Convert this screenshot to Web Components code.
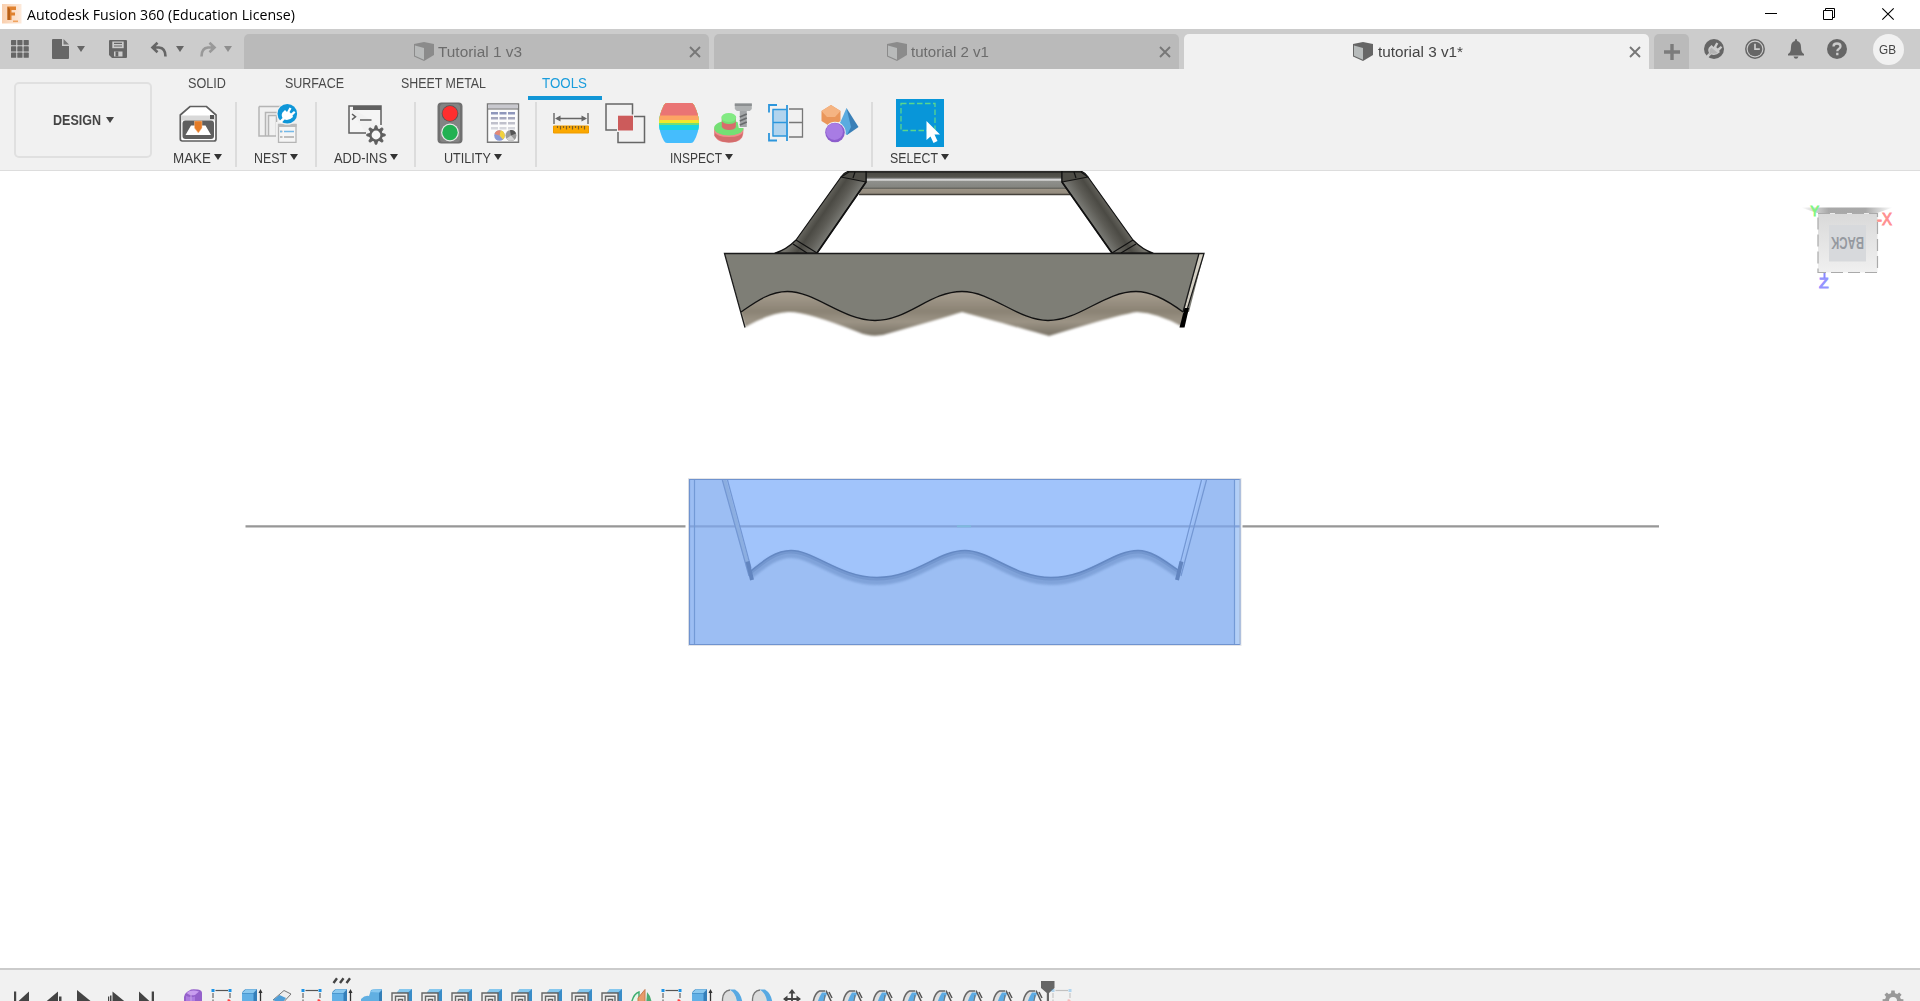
<!DOCTYPE html>
<html lang="en">
<head>
<meta charset="utf-8">
<title>Autodesk Fusion 360 (Education License)</title>
<style>
html,body{margin:0;padding:0;background:#fff;overflow:hidden}
body{font-family:"Liberation Sans",Arial,sans-serif}
</style>
</head>
<body>
<fusion-app></fusion-app>
<script>
const define = (name, html, setup) => customElements.define(name, class extends HTMLElement {
  connectedCallback() {
    if (this.shadowRoot) return;
    const t = document.createElement('template');
    t.innerHTML = typeof html === 'function' ? html(this) : html;
    this.attachShadow({ mode: 'open' }).appendChild(t.content.cloneNode(true));
    if (setup) setup(this);
  }
});

/* Text condensed or widened so that it occupies a given width. */
define('fit-text', el => `<style>:host{display:block;white-space:nowrap;width:${el.getAttribute('w')}px}span{display:inline-block;transform-origin:0 50%}</style><span>${el.getAttribute('text')}</span>`, el => {
  const s = el.shadowRoot.querySelector('span');
  s.style.transform = `scaleX(${((+el.getAttribute('w') + 1) / s.getBoundingClientRect().width).toFixed(4)})`;
});

/* ---------- icons ---------- */
const D = '#5f5f5f';
const ICONS = {
  logo: [20, 20, `<defs><linearGradient id="g"><stop offset="0" stop-color="#f9cfae"/><stop offset="1" stop-color="#fdeadb"/></linearGradient></defs><rect width="19.500" height="19.500" fill="url(#g)"/><path d="M5.500 2.500H14V6H9.500V8.500H13V11.500H9.500V16H5.500Z" fill="#e0822f"/><path d="M5.500 2.500L8 5V16H5.500Z" fill="#b85f17"/><path d="M11 16.500h5v1.600h-5z" fill="#f0a35f"/>`],
  grid: [18, 18, [0, 6.3, 12.6].map(y => [0, 6.3, 12.6].map(x => `<rect x="${x}" y="${y}" width="5.200" height="5.200" rx=".6" fill="#666"/>`).join('')).join('')],
  file: [17, 20, `<path d="M1 0H10V7H17V19Q17 20 16 20H1Q0 20 0 19V1Q0 0 1 0Z" fill="#666"/><path d="M11.500 0L17 5.500H11.500Z" fill="#777"/>`],
  save: [18, 18, `<path d="M1 0H17Q18 0 18 1V17Q18 18 17 18H3L0 15V1Q0 0 1 0Z" fill="#666"/><path d="M3.300 1.500H14.700V8.200H3.300Z" fill="#ccc"/><path d="M5 3.300h8M5 6h8" stroke="#666" stroke-width="1.200"/><path d="M5 11.500H13.500V16.500H5Z" fill="#ccc"/><path d="M6.500 11.500h2.800v5h-2.800z" fill="#666"/>`],
  undo: [16, 15, `<path d="M6.500 .8L1.500 5.500L6.500 10.200M2 5.500H8Q14.500 6 14.500 14.500" fill="none" stroke="#666" stroke-width="2.600"/>`],
  redo: [16, 15, `<path d="M9.500 .8L14.500 5.500L9.500 10.200M14 5.500H8Q1.500 6 1.500 14.500" fill="none" stroke="#999" stroke-width="2.600"/>`],
  cube: [20, 19, `<path d="M0 2L10 0L20 2V13L10 19L0 14.500Z" fill="#666"/><path d="M1 3.500L10 6V17.700L1 13.700Z" fill="#b7bbbb"/>`],
  x: [12, 12, `<path d="M1 1L11 11M11 1L1 11" stroke="currentColor" stroke-width="1.900"/>`],
  plus: [16, 16, `<path d="M8 0V16M0 8H16" stroke="#7c7c7c" stroke-width="3.400"/>`],
  jobs: [20, 20, `<circle cx="10" cy="10" r="10" fill="#666"/><path d="M1.500 17.500L5 14Q3 10 6 7.500L7.500 6L9.700 8L12.300 3.500L14.300 4.500L12.300 8.200L13.700 9.600L16.800 7L18.300 8.600L15.200 11.700L15.800 13.300Q12 17 7.200 15.500L4 18.800Z" fill="#ccc"/><path d="M5.800 13.500Q4.800 10.500 7.500 8.700L13.800 14Q10.500 15.500 7.500 14.300L5 16.500Z" fill="#666" opacity=".25"/>`],
  clock: [20, 20, `<circle cx="10" cy="10" r="9.200" fill="none" stroke="#666" stroke-width="1.500"/><circle cx="10" cy="10" r="7.300" fill="#666"/><path d="M10 4.800V10.200H14.800" fill="none" stroke="#ccc" stroke-width="1.700"/>`],
  bell: [16, 20, `<path d="M8 0Q9.200 0 9.200 2Q13 3.200 13 8Q13 13.500 16 15V16.500H0V15Q3 13.500 3 8Q3 3.200 6.800 2Q6.800 0 8 0ZM5.500 17.500H10.500Q9.800 19.700 8 19.700Q6.200 19.700 5.500 17.500Z" fill="#666"/>`],
  help: [20, 20, `<circle cx="10" cy="10" r="10" fill="#666"/><path d="M6.500 7.500Q6.500 4.500 10 4.500Q13.500 4.500 13.500 7.300Q13.500 9 11.700 10Q10.300 10.800 10.300 12.300M10.300 13.800V16.200" fill="none" stroke="#ccc" stroke-width="2.300"/>`],
  min: [12, 12, `<path d="M0 5.500H12" stroke="#000"/>`],
  restore: [12, 12, `<path d="M.5 2.500H9.500V11.500H.5ZM2.500 2.500V.5H11.500V9.500H9.500" fill="none" stroke="#000"/>`],
  close: [12, 12, `<path d="M.3 .3L11.700 11.700M11.700 .3L.3 11.700" stroke="#000" stroke-width="1.100"/>`],
  arrow: [8, 6, `<path d="M0 0H8L4 6Z" fill="currentColor"/>`],
  make: [40, 40, `<path d="M2.300 12L12 3.500H28.500L38 12V36Q38 38 36 38H4.300Q2.300 38 2.300 36Z" fill="#fff" stroke="${D}" stroke-width="1.700"/><path d="M3.200 12.500H37.200V17.500H3.200Z" fill="#d9d9d9"/><path d="M32 12h4v4h-4z" fill="#555"/><rect x="4.500" y="17.500" width="31.500" height="18.500" rx="3" fill="${D}"/><path d="M7.500 32L13 22.500H16.500L20.300 28L24 22.500H27.500L33 32Z" fill="#fff"/><path d="M16.500 18H24V25L20.300 30L16.500 25Z" fill="#e57c28" stroke="#f6c49d" stroke-width=".5"/>`],
  nest: [40, 40, `<path d="M1 3.500H25V16M1 3.500V33H7.500V9.500H19M10.500 33V12.500H18.500V33ZM10.500 33H7.500M18.500 33H21" fill="none" stroke="#b5b5b5" stroke-width="1.500"/><path d="M18 19H40V41H18Z" fill="#f1f1f1"/><path d="M20.500 21.500H38V39.300H20.500Z" fill="#f5f5f5" stroke="#b5b5b5" stroke-width="1.300"/><path d="M20 21H38.500V24H20Z" fill="#bbb"/><path d="M22 28.500h2.500M22 34h2.500M26 34h10" stroke="#aaa" stroke-width="1.500"/><path d="M22 28.500h2M26 28.500h10" stroke="#74b9e8" stroke-width="1.500"/><circle cx="29.300" cy="11" r="10.800" fill="#f1f1f1"/><circle cx="29.300" cy="10.800" r="9.800" fill="#0e96d8"/><path d="M21 18.500L24.500 15Q22.500 11 25.500 8.500L27 7L29 9L31.500 4.500L33.500 5.500L31.500 9L33 10.500L36 8L37.500 9.500L34.500 12.500L35 14Q31 18 26.500 16.500L23.500 20Z" fill="#fff"/>`],
  addins: [40, 40, `<path d="M3 3H35.500V24M20 30.500H3V3" fill="#f5f5f5"/><path d="M20 30H3V3H35V22" fill="none" stroke="${D}" stroke-width="1.500"/><path d="M7 3H35V7H7Z" fill="${D}"/><path d="M6 11L9.500 13.800L6 16.600M14 17H25.500" fill="none" stroke="${D}" stroke-width="1.500"/><circle cx="30" cy="32" r="9.500" fill="#f1f1f1"/><circle cx="30" cy="32" r="5.600" fill="#f5f5f5" stroke="${D}" stroke-width="2.400"/>${[0,45,90,135,180,225,270,315].map(a => `<path d="M28.500 26L29.200 22.800H30.800L31.500 26Z" fill="${D}" stroke="${D}" stroke-width="1" transform="rotate(${a} 30 32)"/>`).join('')}`],
  traffic: [40, 40, `<rect x="7.500" y="-.5" width="25" height="41" rx="4" fill="#707070"/><rect x="10" y="1" width="20" height="38" rx="3" fill="#838383"/><circle cx="20" cy="10.500" r="8.300" fill="#555"/><circle cx="20" cy="10.500" r="7.500" fill="#ff2f2f"/><circle cx="20" cy="29.500" r="8.900" fill="#e8e8e8"/><circle cx="20" cy="29.500" r="7.700" fill="#22b152"/>`],
  sheet: [40, 40, `<path d="M4.500 1H35.500V39.300H4.500Z" fill="#fcfcfc" stroke="#777" stroke-width="1.400"/><path d="M5.200 1.500H34.800V5.500H5.200Z" fill="#c9c9cf"/><path d="M5 6H35" stroke="#666"/>${[9, 14, 19, 24].map((y, i) => [8, 16.500, 25].map((x, j) => `<rect x="${x}" y="${y}" width="7" height="2.500" fill="${['#8e96bb', '#a5a7bd', '#bfc0cb', '#d6d7dd'][i]}"/>`).join('')).join('')}<circle cx="16.500" cy="32.500" r="5.300" fill="#8a9ad5"/><path d="M16.500 32.500L17.500 27.300A5.300 5.300 0 0 1 20 36.500Z" fill="#f2d23d"/><path d="M16.500 32.500L11.600 31A5.300 5.300 0 0 1 17.500 27.300Z" fill="#e48875"/><circle cx="28" cy="32.500" r="5.500" fill="#9a9a9a"/><path d="M28 32.500L27 27.200A5.500 5.500 0 0 1 33 30.500Z" fill="#555"/><path d="M28 32.500L23.500 35.500A5.500 5.500 0 0 0 31.500 36.600Z" fill="#d5d5d5"/>`],
  measure: [40, 40, `<path d="M3 10V21M37 10V21M6 15.500H34" stroke="#666" stroke-width="1.400"/><path d="M4 15.500L9.500 12.500V18.500ZM36 15.500L30.500 12.500V18.500Z" fill="#666"/><path d="M2.500 23H37.500V30H2.500Z" fill="#fba800" stroke="#ed9b00"/>${[6,9,12,15,18,21,24,27,30,33].map((x, i) => `<path d="M${x + .5} 23V${i % 2 ? 26.500 : 25}" stroke="#7c6028" stroke-width="1.200"/>`).join('')}`],
  interfere: [40, 40, `<path d="M12 27H1V1H27.500V11.500M29 13.500H39.500V39.500H13V29" fill="none" stroke="#666" stroke-width="1.500"/><path d="M13 12.700H28V27.500H13Z" fill="#cc5b5b"/>`],
  barrel: [40, 40, `<defs><clipPath id="c"><path d="M8 0H32Q34 0 35 2Q40 12 40 20Q40 29 35 38Q34 40 32 40H8Q6 40 5 38Q0 29 0 20Q0 12 5 2Q6 0 8 0Z"/></clipPath></defs><g clip-path="url(#c)"><rect width="40" height="40" fill="#45bdfd"/><rect width="40" height="27" fill="#17d4e5"/><rect width="40" height="22" fill="#72df74"/><rect width="40" height="20" fill="#efe92b"/><rect width="40" height="17" fill="#fda464"/><rect width="40" height="12.500" fill="#ea7474"/></g>`],
  component: [40, 40, `<g transform="translate(.8 0)"><path d="M1.500 26V30Q2 39.500 16 39.500Q30 39.500 30.500 30V26Z" fill="#e77f7f"/><path d="M1.500 33Q8 39.500 16 39.500Q25 39.500 29 34L30 28H2Z" fill="#d36d6d"/><path d="M1.500 25V29Q4 34 16 34Q29 34 30.500 28V25Z" fill="#ef8b8b"/><ellipse cx="16" cy="25" rx="14.700" ry="7.500" fill="#74df74"/><path d="M9 15V24Q11 27 16 27Q22 27 23 24V15Z" fill="#d96b6b"/><path d="M9 13V18Q11 21 16 21Q22 21 23 18V13Z" fill="#74df74"/><ellipse cx="16" cy="14.500" rx="7.300" ry="4.500" fill="#83ea83"/><path d="M22 1H39V7H36V25H26L25 20L24 7H22Z" fill="#f1f1f1"/><path d="M22 .5H39V6L37 8H24L22 6Z" fill="#aeb1b2"/><path d="M22 .5H39V3H22Z" fill="#8b8e90"/><path d="M27 8H34V24H27Z" fill="#a2a5a7"/><path d="M27 14L34 11M27 18L34 15M27 22L34 19" stroke="#686b6d" stroke-width="1.700"/></g>`],
  section: [40, 40, `<g transform="translate(1.500 0)"><path d="M4.500 6.500H19V33H4.500Z" fill="#b2d4ee"/><path d="M9.500 2H1.500V9.500M1.500 30V37.500H9.500M19.500 2V38" fill="none" stroke="#2c96dc" stroke-width="1.800"/><path d="M19 6.500H5.500V33H19M5.500 19.500H19" fill="none" stroke="#2c96dc" stroke-width="1.300"/><path d="M21.500 6H35V34H21.500M21.500 19.500H35" fill="none" stroke="#777" stroke-width="1.300"/></g>`],
  shapes: [40, 40, `<path d="M11 2L20.500 8V18L11 24L1.500 18V8Z" fill="#ea965a"/><path d="M11 2L20.500 8L15 14H7L1.500 8Z" fill="#f5b482"/><path d="M26.500 5L38.500 24L27 32Z" fill="#397fb7"/><path d="M26.500 5L17 27L27 32L31 24Z" fill="#5aabe0"/><circle cx="15" cy="29.500" r="10.700" fill="#f1f1f1"/><circle cx="15" cy="29.500" r="9.800" fill="#8c5dcc"/><circle cx="14.500" cy="28.500" r="8.500" fill="#a87ce4"/>`],
  select: [48, 48, `<path d="M0 0H48V48H0Z" fill="#0896d9"/><path d="M5 4.500H39V31.500H5Z" fill="none" stroke="#5ad68e" stroke-width="1.300" stroke-dasharray="5.500 2.500"/><path d="M30.500 22L44 35.500H38.500L41.500 42L37.500 44L34.500 37.500L30.500 41Z" fill="#fff"/>`],
  first: [30, 26, `<path d="M1 1.500H3.200V24H1ZM16 1.500V24L4 12.500Z" fill="#444"/>`],
  back: [30, 26, `<path d="M13 1.500V24L0 12.500ZM14 6.500H16.500V19H14Z" fill="#444"/>`],
  play: [30, 26, `<path d="M1 0V26L17 13Z" fill="#444"/>`],
  fwd: [30, 26, `<path d="M4.500 1.500V24L18 12.500ZM0 6.500H1.200V19H0ZM2 5.500H3.500V20H2Z" fill="#444"/>`],
  last: [30, 26, `<path d="M0 1.500V24L12 12.500ZM12.700 1.500H15V24H12.700Z" fill="#444"/>`],
  form: [30, 26, `<path d="M6 8Q6 5 9 3L13 .5Q15 0 20 .5Q24 1 24 4V14Q20 22 13 22Q6 22 6 17Z" fill="#9561cb"/><path d="M8.500 4Q13 0 21 2.500L17 6Q12 7 8.500 4Z" fill="#c99df0"/><path d="M8 7Q13 9 17 7.500V20H8Z" fill="#ad7ce0"/><path d="M13 2V22" stroke="#c8a5e8"/>`],
  sketch: [30, 26, `<path d="M8.500 1.500H21" stroke="#555" stroke-width="1.200"/><path d="M6 4V22M23 4V10" stroke="#666" stroke-width="1.200" stroke-dasharray="5 1.500"/><path d="M4.500 0h3v3h-3zM21.500 0h3v3h-3z" fill="#1a93e8"/><path d="M22 10l3 3-2 1-3-3z" fill="#f44"/>`],
  extrude: [30, 26, `<path d="M5 4Q7 0 10 0H20V18L16 23H5Z" fill="#357fb9"/><path d="M5 4L9 .3H20L16.500 4Z" fill="#8cc9ef"/><path d="M5 4.500H16.500V23H5Z" fill="#62b0e5"/><path d="M23.500 2V22" stroke="#333" stroke-width="1.300"/><path d="M21.500 4L23.500 0L25.500 4Z" fill="#333"/>`],
  erase: [30, 26, `<path d="M6 11L17 1.500L24 5L13 17Z" fill="#eee" stroke="#777"/><path d="M6 11L12.500 6L19 9L13 17Z" fill="#4f9ed7"/><path d="M6 11L13 14V20L6 15Z" fill="#ccc"/>`],
  combine: [30, 26, `<path d="M4 10Q8 6 12 7L14 1Q17 0 25 0V11Q21 19 16 20H4Z" fill="#61afe2"/><path d="M22 4L25 1V12L22 16Z" fill="#347fb8"/><path d="M13 3L16 .5H25L22 3.500Z" fill="#88c8f0"/>`],
  shell: [30, 26, `<path d="M10 3.500L13 0H25V17L20 21V6H10Z" fill="#3a8dc8"/><path d="M10 3.500L13 0H25L21 3.500Z" fill="#85c7ee"/><path d="M5 4H21V22H5Z" fill="#eee" stroke="#666" stroke-width="1.400"/><path d="M8.500 22V7.200H18V22M11.500 22V10.500H15.500V22" fill="none" stroke="#666" stroke-width="1.400"/>`],
  mirror: [30, 26, `<path d="M4 16Q6 5 12 3V22H4Z" fill="#e9f5e9" stroke="#3cac6e" stroke-width="1.400"/><path d="M11 9L18 .5V24H11Z" fill="#e99b6b" stroke="#c77a4d"/><path d="M20 3Q25 8 25 18H19Z" fill="#4cab73"/>`],
  fillet: [30, 26, `<path d="M5.500 22V10Q6 2 13 1Q19 4 20 14V22Z" fill="#dcdcdc"/><path d="M5.500 22V10Q6 2 13 1" fill="none" stroke="#777" stroke-width="1.300"/><path d="M12.500 .5H18Q25 5 25.500 15H20Q20 5 12.500 .5Z" fill="#58a9e2"/>`],
  move: [30, 26, `<path d="M15 2V18M7 10H23" stroke="#444" stroke-width="1.800"/><path d="M15 0L18.500 4.500H11.500ZM15 20L18.500 15.500H11.500ZM6 10L10.500 6.500V13.500ZM24 10L19.500 6.500V13.500Z" fill="#444"/>`],
  press: [30, 26, `<path d="M5.500 20Q6 5 12.500 2H17L13 10V22H5.500Z" fill="#dedede"/><path d="M5.500 20Q6 5 12.500 2H18" fill="none" stroke="#666" stroke-width="1.600"/><path d="M15 3.500H20.500Q17 11 15.500 22H9Q10 11 15 3.500Z" fill="#5eace4"/><path d="M19 1.500L24.500 13M22 3L25 9" stroke="#555" stroke-width="1.500"/><path d="M18 6L15.500 20" stroke="#777" stroke-width="1"/>`],
  marker: [16, 20, `<path d="M1 0H14.500V7L9 12V20H6.800V12L1 7Z" fill="#666"/>`],
  slashes: [18, 7, `<path d="M1.500 6L5 1.300M8 6L11.500 1.300M14.500 6L18 1.300" stroke="#444" stroke-width="2.400"/>`],
  gear: [22, 22, `<circle cx="11" cy="11" r="6" fill="none" stroke="#999" stroke-width="4"/>${[0,45,90,135,180,225,270,315].map(a => `<path d="M9 4L9.300 .6H12.700L13 4Z" fill="#999" transform="rotate(${a} 11 11)"/>`).join('')}`]
};
define('ui-icon', el => {
  const [w, h, body] = ICONS[el.getAttribute('name')];
  return `<style>:host{display:block;flex:none;width:${w}px;height:${h}px}svg{display:block;overflow:visible}</style><svg width="${w}" height="${h}" viewBox="0 0 ${w} ${h}">${body}</svg>`;
});

/* ---------- title bar ---------- */
define('title-bar', `<style>
:host{display:flex;height:29px;background:#fff;align-items:flex-start;color:#000}
.logo{margin:4px 4px 0 2px}
fit-text{font:14.700px/29px "Open Sans","Noto Sans",sans-serif;margin-left:1px}
.btns{margin:8px 26px 0 auto;display:flex}
</style><ui-icon class="logo" name="logo"></ui-icon><fit-text w="267" text="Autodesk Fusion 360 (Education License)"></fit-text>
<div class="btns"><ui-icon name="min"></ui-icon><ui-icon name="restore" style="margin:0 47px 0 46px"></ui-icon><ui-icon name="close"></ui-icon></div>`);

/* ---------- document tabs ---------- */
define('doc-tab', el => `<style>
:host{display:flex;box-sizing:border-box;width:465px;height:35px;border-radius:5px 5px 0 0;background:#bababa;color:#6c6c6c;align-items:center;font-size:15.500px;flex:none}
:host([active]){background:#f1f1f1;color:#444}
.l{flex:1;display:flex;justify-content:center;align-items:center;gap:4.500px;padding-left:8px}
.l ui-icon{opacity:.55}:host([active]) .l ui-icon{opacity:1}
fit-text{line-height:35px}
.x{margin:0 8px 0 6px;color:#777}
</style><div class="l"><ui-icon name="cube"></ui-icon><fit-text w="${el.getAttribute('w')}" text="${el.getAttribute('text')}"></fit-text></div><ui-icon class="x" name="x"></ui-icon>`);

define('tab-bar', `<style>
:host{display:flex;height:40px;background:#ccc;align-items:flex-end}
.quick{width:244px;height:40px;display:flex;align-items:center;color:#666;flex:none;box-sizing:border-box;padding-left:11px}
.tabs{display:flex;gap:5px}
.add{width:35px;height:35px;background:#bababa;border-radius:5px 5px 0 0;display:flex;align-items:center;justify-content:center}
.right{display:flex;height:40px;align-items:center;padding-left:14.500px}
.av{width:31px;height:31px;border-radius:50%;background:#f1f1f1;display:flex;align-items:center;justify-content:center;font-size:13px;color:#444;margin-left:26px}
.av fit-text{margin-right:4px}
</style>
<div class="quick"><ui-icon name="grid"></ui-icon><ui-icon name="file" style="margin-left:23px"></ui-icon><ui-icon name="arrow" style="margin:-1px 0 0 8px"></ui-icon><ui-icon name="save" style="margin-left:23.500px"></ui-icon><ui-icon name="undo" style="margin-left:24px"></ui-icon><ui-icon name="arrow" style="margin:-1px 0 0 9px"></ui-icon><ui-icon name="redo" style="margin-left:16px"></ui-icon><ui-icon name="arrow" style="margin:-1px 0 0 8px;color:#8e8e8e"></ui-icon></div>
<div class="tabs"><doc-tab w="83" text="Tutorial 1 v3"></doc-tab><doc-tab w="77" text="tutorial 2 v1"></doc-tab><doc-tab active w="84" text="tutorial 3 v1*"></doc-tab><div class="add"><ui-icon name="plus"></ui-icon></div></div>
<div class="right"><ui-icon name="jobs"></ui-icon><ui-icon name="clock" style="margin-left:21px"></ui-icon><ui-icon name="bell" style="margin-left:23px"></ui-icon><ui-icon name="help" style="margin-left:23.500px"></ui-icon><div class="av"><fit-text w="16" text="GB"></fit-text></div></div>`);

/* ---------- ribbon ---------- */
define('ribbon-group', el => `<style>
:host{display:flex;flex-direction:column;align-items:center;justify-content:flex-end;box-sizing:border-box;height:65px;flex:none;width:${el.getAttribute('width')}px;border-right:2px solid #dcdcdc}
:host([last]){border-right:0}
.icons{height:48px;margin-bottom:3px;display:flex;align-items:center;gap:13.800px;padding-left:${el.getAttribute('shift') || 0}px}
::slotted(ui-icon:not([name=select])){margin-top:-3px}
.lab{display:flex;align-items:center;gap:4px;color:#333;height:17px;font-size:14px;padding-right:${el.getAttribute('pull') || 0}px}
fit-text{color:#3c3c3c;line-height:17px}
ui-icon[name=arrow]{margin-top:-3px}
</style><div class="icons"><slot></slot></div><div class="lab"><fit-text w="${el.getAttribute('w')}" text="${el.getAttribute('label')}"></fit-text><ui-icon name="arrow"></ui-icon></div>`);

define('ribbon-bar', `<style>
:host{display:flex;box-sizing:border-box;height:102px;background:#f1f1f1;border-bottom:1px solid #ddd}
.design{box-sizing:border-box;margin:13px 7px 0 14px;width:138px;height:76px;border:2px solid #e0e0e0;border-radius:5px;display:flex;align-items:center;justify-content:center;gap:6px;font-weight:bold;font-size:14px;color:#444;flex:none}
.main{display:flex;flex-direction:column}
nav{display:flex;height:31px;font-size:14px;color:#4a4a4a}
nav fit-text{line-height:28px}
nav div{height:27px;box-sizing:content-box}
nav .on{border-bottom:4px solid #1296d6;color:#1b9ddc;padding:0 16px 0 14px}
.groups{display:flex;margin-top:2px}
</style>
<div class="design"><fit-text w="47" text="DESIGN"></fit-text><ui-icon name="arrow"></ui-icon></div>
<div class="main"><nav><div style="margin-left:28.500px"><fit-text w="37" text="SOLID"></fit-text></div><div style="margin-left:60px"><fit-text w="58" text="SURFACE"></fit-text></div><div style="margin-left:58.500px"><fit-text w="84" text="SHEET METAL"></fit-text></div><div class="on" style="margin-left:43px"><fit-text w="44" text="TOOLS"></fit-text></div></nav>
<div class="groups">
<ribbon-group shift="1" width="78" w="37" label="MAKE"><ui-icon name="make"></ui-icon></ribbon-group>
<ribbon-group shift="3" width="80" w="32" label="NEST"><ui-icon name="nest"></ui-icon></ribbon-group>
<ribbon-group shift="1" width="99" w="52" label="ADD-INS"><ui-icon name="addins"></ui-icon></ribbon-group>
<ribbon-group shift="2" pull="6" width="121" w="46" label="UTILITY"><ui-icon name="traffic"></ui-icon><ui-icon name="sheet"></ui-icon></ribbon-group>
<ribbon-group shift="3" pull="6" width="336" w="51" label="INSPECT"><ui-icon name="measure"></ui-icon><ui-icon name="interfere"></ui-icon><ui-icon name="barrel"></ui-icon><ui-icon name="component"></ui-icon><ui-icon name="section"></ui-icon><ui-icon name="shapes"></ui-icon></ribbon-group>
<ribbon-group last width="93" w="47" label="SELECT"><ui-icon name="select"></ui-icon></ribbon-group>
</div></div>`);

/* ---------- 3D viewport ---------- */
const wave = 'C754 303 769 291.500 787.500 291.500C815 291.500 843 320.500 875 320.500C908 320.500 930 291.500 962 291.500C992 291.500 1018 320.500 1048 320.500C1080 320.500 1104 291.500 1136 291.500C1153 291.500 1171 303 1183 312';
const wave2 = 'M751 571C762 562 775 550.500 791 550.500C814 550.500 840 577.500 877 577.500C916 577.500 938 550.500 965 550.500C990 550.500 1014 577.500 1051 577.500C1090 577.500 1112 550.500 1138 550.500C1152 550.500 1166 562 1178 570';
define('view-port', `<style>:host{display:block;height:797px;background:#fff}svg{display:block;font-family:"Liberation Sans",Arial,sans-serif}</style>
<svg width="1920" height="796" viewBox="0 171 1920 796">
<defs>
<linearGradient id="bar" x1="0" y1="171" x2="0" y2="195" gradientUnits="userSpaceOnUse"><stop offset="0" stop-color="#45443f"/><stop offset=".26" stop-color="#55544d"/><stop offset=".32" stop-color="#999"/><stop offset=".37" stop-color="#ececec"/><stop offset=".43" stop-color="#8f908c"/><stop offset=".65" stop-color="#858681"/><stop offset=".73" stop-color="#696861"/><stop offset=".77" stop-color="#9b9284"/><stop offset=".94" stop-color="#938b7e"/><stop offset="1" stop-color="#555"/></linearGradient>
<linearGradient id="legL" x1="815" y1="207" x2="840" y2="224" gradientUnits="userSpaceOnUse"><stop offset="0" stop-color="#72716a"/><stop offset=".35" stop-color="#4b4a44"/><stop offset=".6" stop-color="#5d5c56"/><stop offset="1" stop-color="#81827d"/></linearGradient>
<linearGradient id="legR" x1="1114" y1="207" x2="1089" y2="224" gradientUnits="userSpaceOnUse"><stop offset="0" stop-color="#72716a"/><stop offset=".35" stop-color="#4b4a44"/><stop offset=".6" stop-color="#5d5c56"/><stop offset="1" stop-color="#81827d"/></linearGradient>
<linearGradient id="taupe" x1="0" y1="291" x2="0" y2="336" gradientUnits="userSpaceOnUse"><stop offset="0" stop-color="#a89f91"/><stop offset=".45" stop-color="#8b8374"/><stop offset=".68" stop-color="#9c9486"/><stop offset="1" stop-color="#797265"/></linearGradient>
<linearGradient id="cubeg" x1="0" y1="0" x2="0" y2="1"><stop offset="0" stop-color="#d9d9d9"/><stop offset="1" stop-color="#f0f0f0"/></linearGradient>
<linearGradient id="sh"><stop offset="0" stop-color="#999" stop-opacity="0"/><stop offset=".3" stop-color="#999" stop-opacity=".85"/><stop offset=".7" stop-color="#999" stop-opacity=".85"/><stop offset="1" stop-color="#999" stop-opacity="0"/></linearGradient>
<filter id="soft" x="-5%" y="-20%" width="110%" height="140%"><feGaussianBlur stdDeviation=".9"/></filter>
<filter id="soft2" x="-5%" y="-50%" width="110%" height="200%"><feGaussianBlur stdDeviation="1.300"/></filter>
<clipPath id="belly"><path d="M741 312${wave}L1183 345H747Z"/></clipPath>
</defs>
<g stroke="#111" stroke-width="1.200" stroke-linejoin="round">
<path d="M866 171H1062L1070 195H859Z" fill="url(#bar)" stroke="none"/><path d="M859 194.500H1070" stroke="#45413b" stroke-width="1.500"/><path d="M866 172H1062"/>
<path d="M841 177Q844 172 850 171H866V182L817 253H775Q786 250 796 240Z" fill="url(#legL)"/>
<path d="M841 177L849 172H866V182Z" fill="#4d4c46"/><path d="M853 178L855 172" fill="none"/>
<path d="M796 240L817 253M793 244L807 253" fill="none"/><path d="M866 182L817 253" stroke-width="1.800"/>
<path d="M1088 177Q1085 172 1080 171H1062V182L1112 253H1153Q1143 250 1133 240Z" fill="url(#legR)"/>
<path d="M1088 177L1081 172H1062V182Z" fill="#4d4c46"/><path d="M1076 178L1074 172" fill="none"/>
<path d="M1133 240L1112 253M1136 244L1121 253" fill="none"/><path d="M1062 182L1112 253" stroke-width="1.800"/>
</g>
<g clip-path="url(#belly)"><path d="M730 278H1194L1183 327Q1158 313 1137 312Q1125 313 1049 336Q1035 332 962 312Q940 319 890 333Q874 339 858 332Q805 311 788 312Q770 313 745 327Z" fill="url(#taupe)" filter="url(#soft)"/></g>
<path d="M736 305L745 327.500L736 330Z" fill="#fff"/>
<path d="M724.500 253.500H1204L1189 312L1183 312C1171 303 1153 291.500 1136 291.500C1104 291.500 1080 320.500 1048 320.500C1018 320.500 992 291.500 962 291.500C930 291.500 908 320.500 875 320.500C843 320.500 815 291.500 787.500 291.500C769 291.500 754 303 741 312Z" fill="#7e7e76"/>
<path d="M741 312${wave}" fill="none" stroke="#111" stroke-width="1.300"/>
<path d="M1199 254H1204L1188 309H1184.500Z" fill="#d2cec2"/>
<path d="M745 327.500L724.500 253.500H1204L1187 310M1199 253.500L1183 312" fill="none" stroke="#1b1b1b" stroke-width="1.300"/>
<path d="M1184.500 308H1189L1184.500 327.500H1179.500Z" fill="#000"/>
<path d="M245.500 526.300H685.500M1242.500 526.300H1659" stroke="#979797" stroke-width="2.300"/>
<path d="M688 478H1241.500V646H688Z" fill="#e4e5e8"/>
<path d="M689 479H1240.500V645H689Z" fill="#9cbef3"/>
<path d="M1235 479.500H1240V644H1235Z" fill="#b3cff6"/>
<path d="M724 480H1204L1179 572C1166 562 1152 550.500 1138 550.500C1112 550.500 1090 577.500 1051 577.500C1014 577.500 990 550.500 965 550.500C938 550.500 916 577.500 877 577.500C840 577.500 814 550.500 791 550.500C775 550.500 762 562 751 571Z" fill="#a1c4fb"/>
<g fill="none"><path d="${wave2}" stroke="#7c9fd6" stroke-width="7" transform="translate(0 4)" filter="url(#soft2)" opacity=".85"/>
<path d="${wave2}" stroke="#6d91cb" stroke-width="3" transform="translate(0 1.500)" opacity=".7"/>
<path d="${wave2}" stroke="#6488c3" stroke-width="1.500"/>
<path d="M689 526.300H1240" stroke="#83a3da" stroke-width="2.200"/><path d="M957 526.300H971" stroke="#7fb9dd" stroke-width="2"/>
<path d="M694.500 479V644.500M1234.500 479V644.500" stroke="#739ad6" stroke-width="1.200"/>
<path d="M724.500 480L749 570" stroke="#8caee0" stroke-width="4"/>
<path d="M722.300 480L749 576M727.500 480L751 568M1201.500 480L1178 572M1206.500 480L1181 576" stroke="#7397d3" stroke-width="1.200"/>
<path d="M747.500 561.500L752 580M1181.500 561.500L1177 580" stroke="#6285bf" stroke-width="4"/>
<path d="M689 479.500H1240M689.500 479V644.500H1240" stroke="#6f93cf" stroke-width="1.200"/><path d="M1240 479V644.500" stroke="#9dafcc"/></g>
<path d="M1801 207.500H1893L1877 213H1817Z" fill="url(#sh)"/>
<g font-size="15"><path d="M1818 213.500H1877.500V272.500H1818Z" fill="url(#cubeg)" stroke="#aaa" stroke-width="1.200" stroke-dasharray="12 5"/>
<path d="M1829 225H1866V261.500H1829Z" fill="#d7d9dc"/>
<text transform="translate(1864 237) rotate(180)" font-weight="bold" font-size="16" fill="#9599a0" textLength="33" lengthAdjust="spacingAndGlyphs">BACK</text>
<text x="1810.500" y="216" fill="#80f580" stroke="#80f580" stroke-width="1" font-size="15" textLength="8.500" lengthAdjust="spacingAndGlyphs">Y</text>
<text x="1877" y="225" fill="#ff8f8f" stroke="#ff8f8f" stroke-width=".9" font-size="16.500" textLength="15" lengthAdjust="spacingAndGlyphs">-X</text>
<text x="1819" y="287.500" fill="#9494ff" stroke="#9494ff" stroke-width="1" textLength="9.500" lengthAdjust="spacingAndGlyphs">Z</text><path d="M1824.500 273V278" stroke="#88f" stroke-width="2"/></g>
</svg>`);

/* ---------- timeline ---------- */
const seq = ['form', 'sketch', 'extrude', 'erase', 'sketch', 'extrude', 'combine', ...Array(8).fill('shell'), 'mirror', 'sketch', 'extrude', 'fillet', 'fillet', 'move', ...Array(8).fill('press'), 'sketch'];
define('time-line', `<style>
:host{display:flex;box-sizing:border-box;height:33px;background:#f1f1f1;border-top:2px solid #cbcbcb;overflow:hidden;align-items:flex-start}
.play{display:flex;width:177.500px;flex:none;box-sizing:border-box;padding:20px 0 0 13px;gap:1.500px}
.ops{display:flex;padding-top:18.500px}
.op{position:relative;width:29.970px}
.mark{position:absolute;right:-9px;top:-7.500px}
.sl{position:absolute;left:5px;top:-12px}
.ghost{opacity:.3}
.gear{margin:20px 16px 0 auto}
</style><div class="play">${['first', 'back', 'play', 'fwd', 'last'].map(n => `<ui-icon name="${n}"></ui-icon>`).join('')}</div>
<div class="ops">${seq.map((n, i) => `<div class="op${i === seq.length - 1 ? ' ghost' : ''}"><ui-icon name="${n}"></ui-icon>${i === 5 ? '<ui-icon class="sl" name="slashes"></ui-icon>' : ''}${i === seq.length - 2 ? '<ui-icon class="mark" name="marker"></ui-icon>' : ''}</div>`).join('')}</div>
<ui-icon class="gear" name="gear"></ui-icon>`);

define('fusion-app', `<style>:host{display:flex;flex-direction:column;width:1920px;height:1001px;overflow:hidden}title-bar,tab-bar,ribbon-bar,view-port,time-line{flex:none}</style>
<title-bar></title-bar><tab-bar></tab-bar><ribbon-bar></ribbon-bar><view-port></view-port><time-line></time-line>`);
</script>
</body>
</html>
